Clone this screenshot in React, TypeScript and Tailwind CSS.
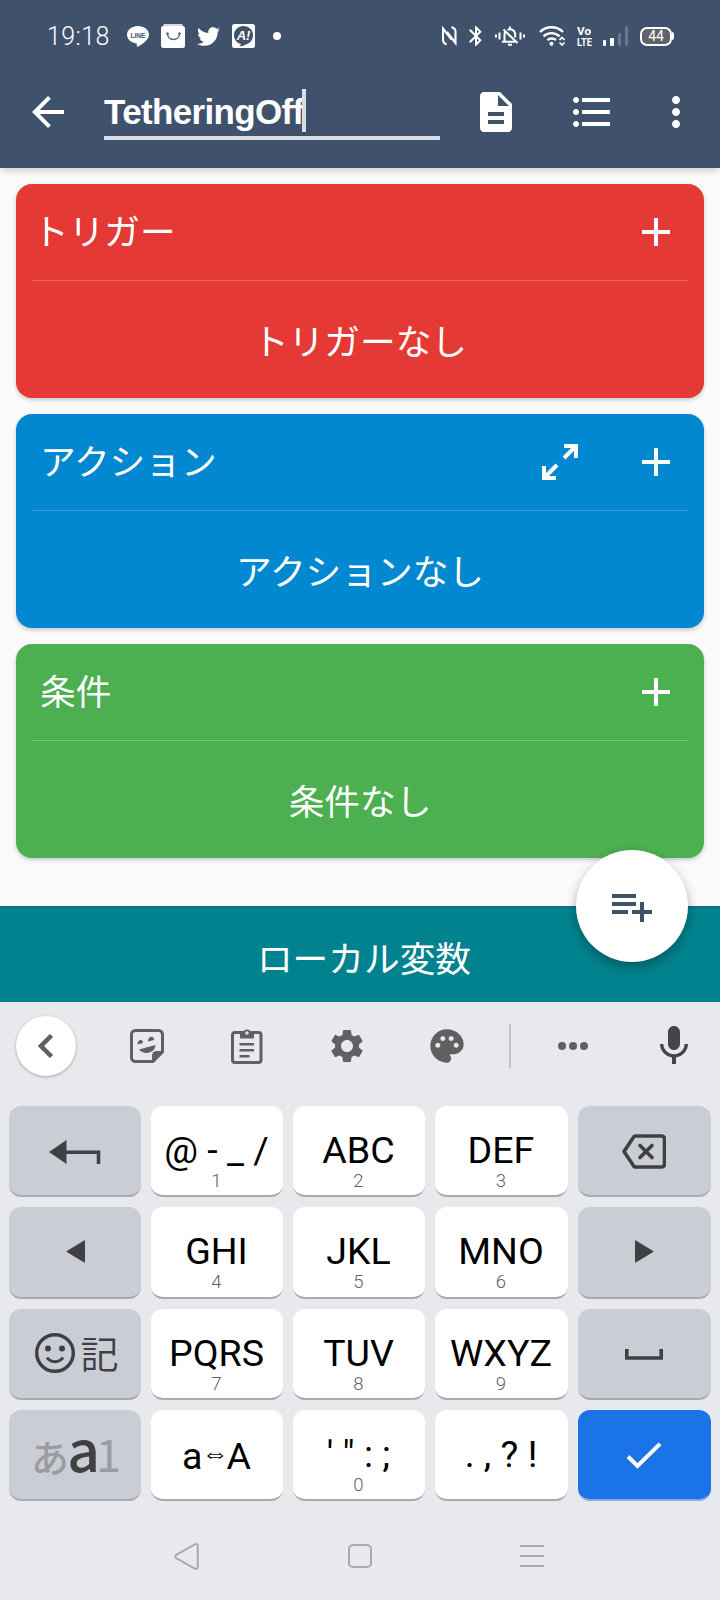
import React from 'react';
import { FaTwitter } from 'react-icons/fa';
import {
  MdAdd,
  MdArrowBack,
  MdBluetooth,
  MdDescription,
  MdFormatListBulleted,
  MdMic,
  MdMoreVert,
  MdPalette,
  MdSettings,
} from 'react-icons/md';

const LineIcon = () => (
  <svg className="w-[22px] h-[21px]" viewBox="0 0 22 21">
    <path fill="#fff" d="M11 0C5 0 0 3.9 0 8.8c0 4.3 3.9 8 9.1 8.6.9.2.9.6.7 2.3 0 .8.2 1.2 1 .9C13.500 19.200 22 14.500 22 8.800 22 3.900 17 0 11 0z" />
    <text x="11" y="11.700" textAnchor="middle" textLength="15" lengthAdjust="spacingAndGlyphs" fontSize="7.200" fontWeight="bold" fill="#40526b" fontFamily="Liberation Sans, sans-serif">LINE</text>
  </svg>
);

const BagIcon = () => (
  <svg className="w-6 h-6" viewBox="0 0 24 24">
    <path fill="#d5d9e0" d="M3 0h18l2 4H1z" />
    <rect y="2" width="24" height="22" rx="2.500" fill="#fff" />
    <path d="M6.500 9.500c0 8 12 8 12 0" fill="none" stroke="#5b6878" strokeWidth="1.600" />
    <circle cx="6.500" cy="9.500" r="1.300" fill="#5b6878" />
    <circle cx="18.500" cy="9.500" r="1.300" fill="#5b6878" />
  </svg>
);

const AnswerIcon = () => (
  <svg className="w-[23px] h-6" viewBox="0 0 23 24">
    <rect width="23" height="24" rx="2.500" fill="#fff" />
    <path fill="#40526b" d="M11.500 2C6.200 2 2 6 2 11.200c0 4.500 3 7.800 7 8.800l-1.500 2.200c4 0 5.500-1 7.500-2.200 3.500-1.200 6-4.600 6-8.800C21 6 16.800 2 11.500 2z" />
    <text x="11.500" y="16" textAnchor="middle" fontSize="13" fontWeight="bold" fontStyle="italic" fill="#fff" fontFamily="Liberation Sans, sans-serif">A!</text>
  </svg>
);

const NfcIcon = () => (
  <svg className="w-[15px] h-5" viewBox="0 0 15 20" fill="none" stroke="#fff" strokeWidth="2.100">
    <path d="M4.500 18.500C2 17.500 1 16.500 1 14V2.500L9.500 13.500" />
    <path d="M9.500 1C12.500 2 13.500 3 13.500 5.500V17L5 6" />
  </svg>
);

const SilentIcon = () => (
  <svg className="w-[30px] h-5" viewBox="0 0 30 20" fill="none" stroke="#fff" strokeWidth="2">
    <path d="M1 8.500v3M4.500 6.500v7M29 8.500v3M25.500 6.500v7" />
    <path d="M9.500 15V8.500c0-1.500.5-2.700 1.300-3.500M12.500 3.800c4-1.500 7.700.7 7.700 4.700v3M15 .5v3" />
    <path d="M7 15.800h13M8.500 3.500l14 13.500M13 18.800h4" />
  </svg>
);

const WifiIcon = () => (
  <svg className="w-[27px] h-5" viewBox="0 0 27 20" fill="none" stroke="#fff">
    <path strokeWidth="2.400" d="M1 6C7.500-.3 17.500-.3 24 6M4.500 10.300c4.500-4.300 11.500-4.300 16 0M8.500 14.200c2-2 6-2.300 8.500-.2" />
    <circle cx="12.500" cy="17.700" r="2" fill="#fff" stroke="none" />
    <path strokeWidth="1.700" d="M20.500 14l2.500-2.500 2.500 2.500M20.500 16.500L23 19l2.500-2.500" />
  </svg>
);

const VolteIcon = () => (
  <svg className="w-4 h-6" viewBox="0 0 16 24" fill="#fff" fontFamily="Roboto, sans-serif" fontWeight="bold">
    <text x="1" y="11" fontSize="11" textLength="14" lengthAdjust="spacingAndGlyphs">Vo</text>
    <text x="1" y="22" fontSize="11" textLength="15" lengthAdjust="spacingAndGlyphs">LTE</text>
  </svg>
);

const SignalIcon = () => (
  <svg className="w-[25px] h-5" viewBox="0 0 25 20">
    <rect y="14" width="3" height="6" rx="1" fill="#fff" />
    <rect x="7" y="12" width="4" height="8" rx="1" fill="#fff" />
    <rect x="15" y="7" width="3" height="13" rx="1" fill="#6b788c" />
    <rect x="22" width="3" height="20" rx="1" fill="#6b788c" />
  </svg>
);

const ExpandIcon = () => (
  <svg className="w-9 h-9" viewBox="0 0 36 36" fill="none" stroke="#fff" strokeWidth="4">
    <path d="M22 2h12v12M33 3L22 14M2 22v12h12M3 33l12-12" />
  </svg>
);

const PlaylistAddIcon = () => (
  <svg className="w-12 h-12" viewBox="0 0 24 24" fill="currentColor">
    <path d="M14 10H2v2h12v-2zm0-4H2v2h12V6zm4 8v-4h-2v4h-4v2h4v4h2v-4h4v-2h-4zM2 16h8v-2H2v2z" />
  </svg>
);

const StickerIcon = () => (
  <svg className="w-[34px] h-[34px]" viewBox="0 0 34 34" fill="#5f6062">
    <path fill="none" stroke="#5f6062" strokeWidth="3" strokeLinejoin="round" d="M5.500 1.500h23a4 4 0 0 1 4 4V23l-9.500 9.500H5.500a4 4 0 0 1-4-4v-23a4 4 0 0 1 4-4z" />
    <path d="M22 33v-6.500a4.500 4.500 0 0 1 4.500-4.500H34zM7.500 15.500c0-6 6-5.500 5.500-1.500zM18 12.500c0-6.500 6.500-5.500 6-1.500zM9 20.500l16.500-4.500c-.5 8.500-12 10.500-16.500 4.500z" />
  </svg>
);

const ClipboardIcon = () => (
  <svg className="w-8 h-9" viewBox="0 0 32 36" fill="#5f6062">
    <rect x="1.500" y="4.500" width="28.500" height="30" rx="2.500" fill="none" stroke="#5f6062" strokeWidth="3" />
    <path d="M9 4h3a4.500 4.500 0 0 1 8 0h3v6.500H9z" />
    <circle cx="16" cy="5" r="1.700" fill="#e8e9ed" />
    <path d="M8.500 15h14.500v2.500H8.500zM8.500 21h14.500v2.500H8.500zM8.500 27h10v2.500h-10z" />
  </svg>
);

const EnterIcon = () => (
  <svg className="mt-0.5 w-[52px] h-6" viewBox="0 0 52 24">
    <path d="M0 12L17.500 0v24z" fill="#404042" />
    <path d="M17 12.300h32.500V24" fill="none" stroke="#404042" strokeWidth="3.500" />
  </svg>
);

const BackspaceIcon = () => (
  <svg className="mt-0.5 mr-0.5 w-11 h-[35px]" viewBox="0 0 44 35" fill="none" stroke="#404042" strokeWidth="3.600" strokeLinejoin="round">
    <path d="M13.500 2h26a3 3 0 0 1 3 3v25a3 3 0 0 1-3 3h-26a2 2 0 0 1-1.800-1L2 17.500 11.700 3a2 2 0 0 1 1.800-1z" />
    <path d="M18 11.500l12 12M30 11.500l-12 12" strokeLinecap="round" />
  </svg>
);

const SmileIcon = () => (
  <svg className="w-10 h-10" viewBox="0 0 40 40" fill="none" stroke="#404042">
    <circle cx="20" cy="20" r="18.300" strokeWidth="3.400" />
    <circle cx="13" cy="15.500" r="3" fill="#404042" stroke="none" />
    <circle cx="27" cy="15.500" r="3" fill="#404042" stroke="none" />
    <path d="M12 24.500c3.500 5.500 12.500 5.500 16 0" strokeWidth="3" />
  </svg>
);

const StatusBar = () => (
  <div className="h-[72px] flex items-center text-white">
    <span className="ml-[47px] w-20 text-[25px] leading-none font-[350] tracking-[0.4px]">19:18</span>
    <LineIcon />
    <span className="ml-3"><BagIcon /></span>
    <FaTwitter className="ml-3 w-[23px] h-[23px]" />
    <span className="ml-3"><AnswerIcon /></span>
    <span className="ml-[18px] w-2 h-2 rounded-full bg-white" />
    <div className="ml-auto mr-[46px] flex items-center">
      <NfcIcon />
      <MdBluetooth className="ml-[7px] w-6 h-6" />
      <span className="ml-[7px]"><SilentIcon /></span>
      <span className="ml-3.5"><WifiIcon /></span>
      <span className="ml-2.5"><VolteIcon /></span>
      <span className="ml-[11px]"><SignalIcon /></span>
      <div className="ml-3 w-8 h-[19px] rounded-[7px] border-2 border-white bg-[#5f646c] text-[14px] leading-[15px] text-center">44</div>
      <span className="w-0.5 h-2 rounded-r bg-white" />
    </div>
  </div>
);

const Toolbar = () => (
  <div className="h-24 flex items-start text-white">
    <MdArrowBack className="ml-6 mt-4 w-12 h-12" />
    <div className="ml-8 mt-4 w-[336px] h-[52px] flex items-start border-b-4 border-[#d9dce3]">
      <span className="mt-[3px] w-[198px] whitespace-nowrap text-[35px] leading-[42px] font-bold tracking-[-0.65px] font-['Liberation_Sans',sans-serif]">TetheringOff</span>
      <span className="mt-px w-1 h-[43px] bg-[#d9dce3]" />
    </div>
    <MdDescription className="ml-8 mt-4 w-12 h-12" />
    <MdFormatListBulleted className="ml-12 mt-4 w-12 h-12" />
    <MdMoreVert className="ml-9 mt-4 w-12 h-12" />
  </div>
);

interface SectionCardProps {
  title: string;
  empty: string;
  color: string;
  divider: string;
  titleInset?: string;
  expandable?: boolean;
}

const SectionCard: React.FC<SectionCardProps> = ({ title, empty, color, divider, titleInset = 'pl-2', expandable }) => (
  <section className={`h-[214px] rounded-2xl px-4 text-white shadow-[0_2px_4px_rgba(0,0,0,0.2)] ${color}`}>
    <div className={`h-[97px] flex items-center border-b pr-2 ${titleInset} ${divider}`}>
      <h2 className="flex-1 text-[35.7px] leading-[52px] pb-1">{title}</h2>
      {expandable && <span className="mr-[54px]"><ExpandIcon /></span>}
      <MdAdd className="w-12 h-12" />
    </div>
    <p className="pt-[33px] text-center text-[35.7px] leading-[52px]">{empty}</p>
  </section>
);

const Key = ({ children, hint }: { children: React.ReactNode; hint?: string }) => (
  <div className="rounded-[12px] bg-white border-b-2 border-[#a9aaae] pt-6 flex flex-col items-center text-black">
    <span className="h-10 -ml-px text-[37.6px] leading-10 whitespace-nowrap">{children}</span>
    <span className="mt-px -ml-px text-[18.5px] leading-5 font-[350] text-[#606163]">{hint}</span>
  </div>
);

const FnKey = ({ children }: { children: React.ReactNode }) => (
  <div className="rounded-[12px] bg-[#cbcdd6] border-b-2 border-[#a9aaae] flex items-center justify-center text-[#404042]">
    {children}
  </div>
);

const KeyboardTools = () => (
  <div className="h-[88px] flex items-center px-4 text-[#5f6062]">
    <div className="w-[60px] h-[60px] rounded-full bg-white shadow-[0_1px_3px_rgba(0,0,0,0.3)] flex items-center justify-center">
      <svg className="w-4 h-6" viewBox="0 0 16 24" fill="none" stroke="#5f6062" strokeWidth="4.500">
        <path d="M13.500 1.500L3 12l10.500 10.500" />
      </svg>
    </div>
    <span className="ml-[54px]"><StickerIcon /></span>
    <span className="ml-[67px]"><ClipboardIcon /></span>
    <MdSettings className="ml-16 w-10 h-10" />
    <MdPalette className="ml-[60px] w-10 h-10" />
    <span className="ml-[42px] w-0.5 h-11 bg-[#c2c3c8]" />
    <div className="ml-[47px] flex gap-[3px]">
      <span className="w-2 h-2 rounded-full bg-[#5f6062]" />
      <span className="w-2 h-2 rounded-full bg-[#5f6062]" />
      <span className="w-2 h-2 rounded-full bg-[#5f6062]" />
    </div>
    <MdMic className="ml-[62px] w-12 h-12 text-[#454547]" />
  </div>
);

const Keyboard = () => (
  <div className="h-[598px] bg-[#e8e9ed] font-['Roboto','Noto_Sans_CJK_JP',sans-serif]">
    <KeyboardTools />
    <div className="mt-4 mx-[9px] h-[395px] grid grid-cols-[132px_132px_132px_133px_133px] grid-rows-4 gap-2.5">
      <FnKey><EnterIcon /></FnKey>
      <Key hint="1">@ - _ /</Key>
      <Key hint="2">ABC</Key>
      <Key hint="3">DEF</Key>
      <FnKey><BackspaceIcon /></FnKey>

      <FnKey>
        <svg className="w-[19px] h-[23px]" viewBox="0 0 19 23"><path d="M0 11.500L19 0v23z" fill="#404042" /></svg>
      </FnKey>
      <Key hint="4">GHI</Key>
      <Key hint="5">JKL</Key>
      <Key hint="6">MNO</Key>
      <FnKey>
        <svg className="w-[19px] h-[23px]" viewBox="0 0 19 23"><path d="M19 11.500L0 0v23z" fill="#404042" /></svg>
      </FnKey>

      <FnKey>
        <SmileIcon />
        <span className="ml-[5px] -mr-1 -mt-0.5 text-[38px] leading-none font-[350] font-['Noto_Sans_CJK_JP',sans-serif]">記</span>
      </FnKey>
      <Key hint="7">PQRS</Key>
      <Key hint="8">TUV</Key>
      <Key hint="9">WXYZ</Key>
      <FnKey>
        <svg className="mt-0.5 mr-0.5 w-[38px] h-[11px]" viewBox="0 0 38 11"><path d="M1.800 0v9H36.200V0" fill="none" stroke="#404042" strokeWidth="3.600" /></svg>
      </FnKey>

      <FnKey>
        <div className="mb-3.5 flex items-baseline font-['Noto_Sans_CJK_JP',sans-serif] leading-none text-[#9b9ca1]">
          <span className="text-[38px] font-medium">あ</span>
          <span className="-ml-0.5 text-[57px] leading-[58px] font-medium text-[#404042]">a</span>
          <span className="-ml-1 -mr-0.5 text-[45px]">1</span>
        </div>
      </FnKey>
      <Key><span className="inline-block pt-0.5">a<span className="inline-block w-[24px] -indent-px text-center text-[27px] leading-none align-[7px] font-['DejaVu_Sans',sans-serif] font-extralight">⇔</span>A</span></Key>
      <Key hint="0">' " : ;</Key>
      <Key>. , ? !</Key>
      <div className="rounded-[12px] bg-[#1b73e8] border-b-2 border-[#86a9dc] flex items-center justify-center">
        <svg className="mt-1 mr-0.5 w-9 h-7" viewBox="0 0 36 28"><path d="M2 14.500l9.500 9.500L34 1.800" fill="none" stroke="#fff" strokeWidth="4" /></svg>
      </div>
    </div>
    <div className="mt-[42px] h-[26px] flex items-center">
      <svg className="ml-[174px] w-[25px] h-[27px]" viewBox="0 0 25 27" fill="none" stroke="#a8a9ad" strokeWidth="2">
        <path d="M2.200 11.800L20.800 1.400a2 2 0 0 1 3 1.700v20.800a2 2 0 0 1-3 1.700L2.200 15.200a2 2 0 0 1 0-3.400z" />
      </svg>
      <span className="ml-[149px] w-6 h-6 rounded-[5px] border-2 border-[#a8a9ad]" />
      <div className="ml-[148px] w-6 flex flex-col gap-2">
        <span className="h-0.5 bg-[#a8a9ad]" />
        <span className="h-0.5 bg-[#a8a9ad]" />
        <span className="h-0.5 bg-[#a8a9ad]" />
      </div>
    </div>
  </div>
);

const App: React.FC = () => {
  return (
    <div className="w-[720px] h-[1600px] overflow-hidden bg-[#fafafa] font-['Roboto','Noto_Sans_CJK_JP',sans-serif]">
      <header className="relative h-[168px] bg-[#40526b] shadow-[0_2px_8px_rgba(0,0,0,0.2)]">
        <StatusBar />
        <Toolbar />
      </header>
      <main className="h-[738px] px-4 pt-4 flex flex-col gap-4 font-['Noto_Sans_CJK_JP',sans-serif]">
        <SectionCard title="トリガー" empty="トリガーなし" color="bg-[#e53935]" divider="border-[#ee6360]" titleInset="pl-px" />
        <SectionCard title="アクション" empty="アクションなし" color="bg-[#0288d1]" divider="border-[#36a0da]" expandable />
        <SectionCard title="条件" empty="条件なし" color="bg-[#4caf50]" divider="border-[#70bf73]" />
      </main>
      <div className="relative h-24 bg-[#00838f] border-t-2 border-[#0b737d]">
        <p className="pt-[23px] pl-2 text-center text-white text-[35.7px] leading-[52px] font-['Noto_Sans_CJK_JP',sans-serif]">ローカル変数</p>
        <button className="absolute right-8 -top-[58px] w-28 h-28 rounded-full bg-white text-[#40526b] shadow-[0_5px_12px_rgba(0,0,0,0.3)] flex items-center justify-center">
          <PlaylistAddIcon />
        </button>
      </div>
      <Keyboard />
    </div>
  );
};

export default App;
